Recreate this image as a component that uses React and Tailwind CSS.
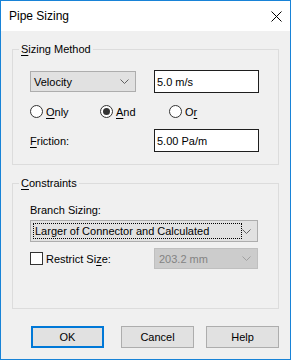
const Key = ({ children }) => <span className="underline underline-offset-2">{children}</span>;

const Chevron = ({ color = '#606060' }) => (
  <svg width="9" height="5" viewBox="0 0 9 5" className="shrink-0">
    <path d="M0.5 0.5 L4.5 4.5 L8.5 0.5" fill="none" stroke={color} strokeWidth="1" />
  </svg>
);

const Radio = ({ checked, children, className = '' }) => (
  <div className={`flex items-center gap-[3px] ${className}`}>
    <span className="w-[13px] h-[13px] rounded-full border border-[#333] bg-white flex items-center justify-center">
      {checked && <span className="w-[7px] h-[7px] rounded-full bg-[#333]" />}
    </span>
    <span>{children}</span>
  </div>
);

const Group = ({ label, className = '', children }) => (
  <fieldset className={`mx-[11px] border border-[#dcdcdc] ${className}`}>
    <legend className="ml-[6px] px-[2px] leading-[14px]">{label}</legend>
    {children}
  </fieldset>
);

const Button = ({ children, primary, className = '' }) => (
  <button
    className={`w-[73px] h-[22px] bg-[#e1e1e1] leading-[14px] ${primary ? 'border-2 border-[#0078d7]' : 'border border-[#adadad]'} ${className}`}
  >
    {children}
  </button>
);

export default function App() {
  return (
    <div className="w-[292px] h-[360px] bg-white text-[11px] leading-[14px] text-black" style={{ fontFamily: '"Liberation Sans", Arial, sans-serif' }}>
      <div className="w-[291px] h-[360px] border border-[#1883d7] flex flex-col">
        <div className="h-[30px] bg-white flex items-center justify-between pl-[8px] pr-[8px] shrink-0">
          <span className="text-[12px]">Pipe Sizing</span>
          <svg width="11" height="11" viewBox="0 0 11 11">
            <path d="M0.5 0.5 L10.5 10.5 M10.5 0.5 L0.5 10.5" stroke="#000" strokeWidth="1" />
          </svg>
        </div>

        <div className="flex-1 bg-[#f0f0f0] pt-[11px] flex flex-col">
          <Group label={<><Key>S</Key>izing Method</>}>
            <div className="pl-[17px] pr-[19px] pt-[14px] pb-[12px] flex flex-col">
              <div className="flex items-center justify-between h-[23px]">
                <div className="w-[106px] h-[21px] bg-[#e1e1e1] border border-[#adadad] flex items-center justify-between pl-[3px] pr-[6px]">
                  <span>Velocity</span>
                  <Chevron />
                </div>
                <div className="w-[105px] h-[23px] bg-white border border-[#1e1e1e] flex items-center pl-[2px]">5.0 m/s</div>
              </div>
              <div className="flex items-center h-[13px] mt-[12px]">
                <Radio className="w-[70px]"><Key>O</Key>nly</Radio>
                <Radio checked className="w-[69px]"><Key>A</Key>nd</Radio>
                <Radio>O<Key>r</Key></Radio>
              </div>
              <div className="flex items-center justify-between h-[23px] mt-[11px]">
                <span><Key>F</Key>riction:</span>
                <div className="w-[105px] h-[23px] bg-white border border-[#1e1e1e] flex items-center pl-[2px]">5.00 Pa/m</div>
              </div>
            </div>
          </Group>

          <Group label={<><Key>C</Key>onstraints</>} className="mt-[11px]">
            <div className="pl-[17px] pr-[20px] pt-[13px] pb-[39px] flex flex-col">
              <span>Branch Sizing:</span>
              <div className="mt-[3px] h-[22px] bg-[#e1e1e1] border border-[#adadad] flex items-center justify-between pl-[2px] pr-[6px]">
                <span className="w-[209px] h-[16px] border border-dotted border-black flex items-center pl-[1px]">
                  Larger of Connector and Calculated
                </span>
                <Chevron />
              </div>
              <div className="flex items-center justify-between mt-[6px] h-[21px]">
                <div className="flex items-center gap-[3px]">
                  <span className="w-[13px] h-[13px] border border-[#333] bg-white" />
                  <span>Restrict Si<Key>z</Key>e:</span>
                </div>
                <div className="w-[104px] h-[21px] bg-[#cccccc] border border-[#bfbfbf] flex items-center justify-between pl-[4px] pr-[6px] text-[#838383]">
                  <span>203.2 mm</span>
                  <Chevron color="#a0a0a0" />
                </div>
              </div>
            </div>
          </Group>

          <div className="flex mt-[17px] pl-[30px]">
            <Button primary>OK</Button>
            <Button className="ml-[17px]">Cancel</Button>
            <Button className="ml-[12px]">Help</Button>
          </div>
        </div>
      </div>
    </div>
  );
}
